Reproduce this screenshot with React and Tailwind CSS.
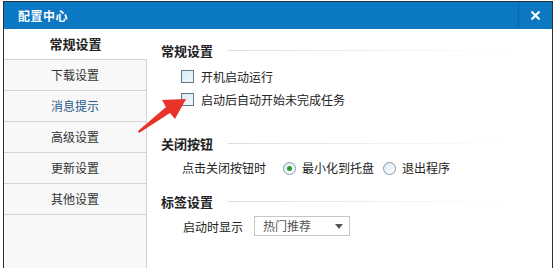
import React from 'react';

const font = { fontFamily: '"Noto Sans CJK SC", "Liberation Sans", sans-serif' };

const menu = ['常规设置', '下载设置', '消息提示', '高级设置', '更新设置', '其他设置'];

function Checkbox() {
  return (
    <span className="inline-block w-[13px] h-[13px] border border-[#5b7b8e] bg-linear-to-br from-[#d6e9f4] to-[#f3f9fc] shrink-0" />
  );
}

function Radio({ checked }) {
  return (
    <span className="w-[13px] h-[13px] rounded-full border border-[#7f9bb0] bg-linear-to-br from-[#dbe9f2] to-white flex items-center justify-center shrink-0">
      {checked && <span className="w-[5px] h-[5px] rounded-full bg-[#2f9a2f]" />}
    </span>
  );
}

function Heading({ children }) {
  return (
    <div className="flex items-center h-[20px]">
      <span className="text-[13px] font-bold text-[#222] leading-none">{children}</span>
      <span className="ml-[15px] w-[280px] h-px bg-linear-to-r from-[#dedede] to-transparent" />
    </div>
  );
}

export default function App() {
  return (
    <div className="relative w-[556px] h-[268px] overflow-hidden bg-white pt-px" style={font}>
      <div className="ml-[3px] w-[550px] h-[300px] border border-[#2e2e2e] flex flex-col">
        {/* title bar */}
        <div className="h-[27px] bg-[#0a78c3] flex items-center shrink-0">
          <span className="ml-[14px] text-white text-[12px] font-bold tracking-[0.5px]">配置中心</span>
          <div className="ml-auto h-full w-[34px] border-l border-[#0966a8] flex items-center justify-center">
            <svg width="11" height="11" viewBox="0 0 11 11">
              <path d="M1.5 1.5 L9.5 9.5 M9.5 1.5 L1.5 9.5" stroke="white" strokeWidth="2.2" />
            </svg>
          </div>
        </div>

        <div className="flex flex-1">
          {/* sidebar */}
          <div className="w-[143px] flex flex-col shrink-0">
            {menu.map((m, i) => (
              <div
                key={m}
                className={
                  i === 0
                    ? 'h-[31px] bg-white border-b border-[#d4d4d4] flex items-center justify-center text-[13px] font-bold text-[#222]'
                    : 'h-[31px] bg-[#f8f8f8] border-b border-r border-[#d4d4d4] flex items-center justify-center text-[12px] ' +
                      (i === 2 ? 'text-[#1f5a8c]' : 'text-[#333]')
                }
              >
                {m}
              </div>
            ))}
            <div className="flex-1 bg-[#f8f8f8] border-r border-[#cfcfcf]" />
          </div>

          {/* content */}
          <div className="flex-1 pl-[14px] pt-[11px] text-[12px] text-[#222]">
            <Heading>常规设置</Heading>
            <div className="mt-[5px] ml-[20px]">
              <div className="h-[23px] flex items-center gap-[7px]">
                <Checkbox />
                <span>开机启动运行</span>
              </div>
              <div className="h-[23px] flex items-center gap-[7px]">
                <Checkbox />
                <span>启动后自动开始未完成任务</span>
              </div>
            </div>

            <div className="mt-[22px]">
              <Heading>关闭按钮</Heading>
            </div>
            <div className="mt-[3px] ml-[21px] h-[24px] flex items-center">
              <span>点击关闭按钮时</span>
              <span className="ml-[17px] flex items-center gap-[6px]">
                <Radio checked />
                <span>最小化到托盘</span>
              </span>
              <span className="ml-[9px] flex items-center gap-[6px]">
                <Radio />
                <span>退出程序</span>
              </span>
            </div>

            <div className="mt-[11px]">
              <Heading>标签设置</Heading>
            </div>
            <div className="mt-[5px] ml-[22px] h-[20px] flex items-center">
              <span className="mt-[2px]">启动时显示</span>
              <div className="ml-[11px] w-[96px] h-[20px] border border-[#c6c6c6] bg-white flex items-center pl-[8px] pr-[6px] text-[#555]">
                <span>热门推荐</span>
                <svg className="ml-auto" width="8" height="5" viewBox="0 0 8 5">
                  <path d="M0 0 H8 L4 5 Z" fill="#555" />
                </svg>
              </div>
            </div>
          </div>
        </div>
      </div>

      {/* red arrow */}
      <svg className="absolute left-0 top-0 pointer-events-none" width="556" height="268">
        <polygon
          points="138,131 166,107 162,100 186,99 175,119 170,113 139,133"
          fill="#e8332a"
        />
      </svg>
    </div>
  );
}
